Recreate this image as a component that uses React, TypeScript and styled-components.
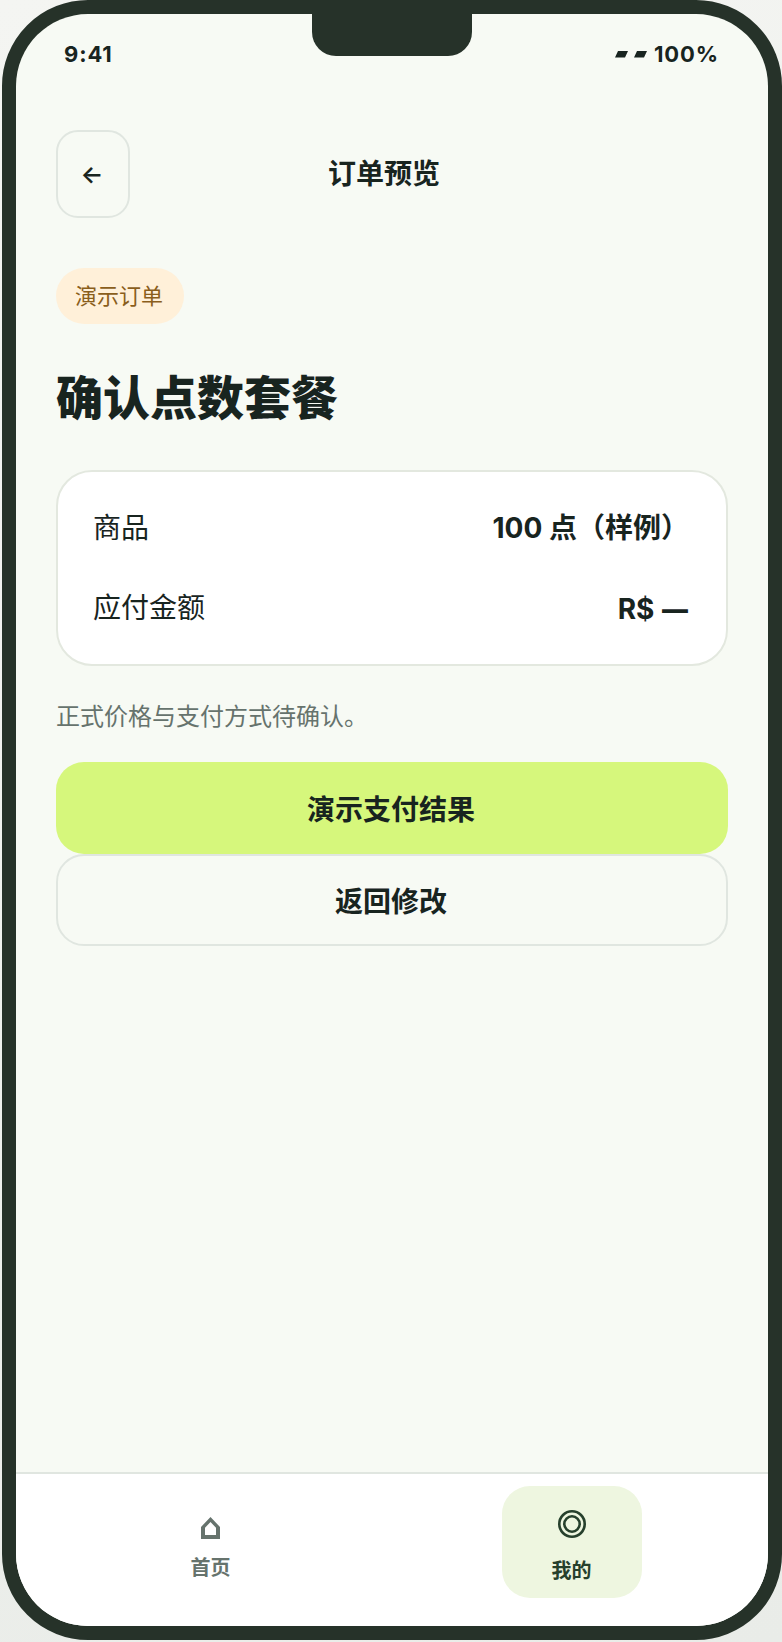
import React from "react";
import styled, { createGlobalStyle } from "styled-components";

const Global = createGlobalStyle`
  html, body { margin: 0; padding: 0; }
  body {
    width: 782px;
    height: 1642px;
    overflow: hidden;
    background: linear-gradient(160deg, #f4f5f2 0%, #e9ece8 100%);
    font-family: Inter, "Noto Sans CJK SC", sans-serif;
    color: #18241f;
  }
  * { box-sizing: border-box; }
`;

const Page = styled.div`
  width: 782px;
  height: 1642px;
  padding: 0 0 2px 2px;
`;

const Shell = styled.div`
  position: relative;
  width: 780px;
  height: 1640px;
  border: 14px solid #263229;
  border-radius: 86px;
  background: #263229;
`;

const Screen = styled.div`
  display: flex;
  flex-direction: column;
  height: 100%;
  border-radius: 72px;
  overflow: hidden;
  background: #f7faf4;
`;

const Notch = styled.div`
  position: absolute;
  top: -14px;
  left: 296px;
  width: 160px;
  height: 56px;
  border-radius: 0 0 24px 24px;
  background: #263229;
`;

const StatusBar = styled.div`
  display: flex;
  justify-content: space-between;
  align-items: center;
  height: 30px;
  margin-top: 25px;
  padding: 0 49px 0 48px;
  font-size: 22px;
  font-weight: 700;
  letter-spacing: 0.88px;
  line-height: 30px;
`;

const StatusRight = styled.span`
  display: flex;
  align-items: center;
  gap: 7px;
`;

const Signal = styled.svg`
  display: block;
  width: 32px;
  height: 8px;
  fill: #18241f;
`;

const Main = styled.main`
  flex: 1;
  display: flex;
  flex-direction: column;
  align-items: stretch;
  padding: 61px 40px 0;
`;

const Header = styled.header`
  display: grid;
  grid-template-columns: 74px 1fr 90px;
  align-items: center;
  height: 88px;
`;

const BackButton = styled.button`
  display: flex;
  align-items: center;
  justify-content: center;
  width: 74px;
  height: 88px;
  padding: 0 2px 0 0;
  border: 2px solid #e0e6e0;
  border-radius: 22px;
  background: transparent;
  color: #18241f;
  font: 600 24px Inter, "Noto Sans CJK SC", sans-serif;
`;

const Title = styled.h2`
  margin: 0;
  text-align: center;
  font-size: 28px;
  font-weight: 700;
  line-height: 40px;
`;

const Badge = styled.span`
  align-self: flex-start;
  margin-top: 50px;
  padding: 0 19px;
  width: 128px;
  height: 56px;
  border-radius: 28px;
  background: #fff0d9;
  color: #8a5e1c;
  font-size: 22px;
  line-height: 56px;
`;

const Heading = styled.h1`
  margin: 44px 0 42px;
  font-size: 47px;
  font-weight: 800;
  line-height: 60px;
`;

const Card = styled.section`
  display: flex;
  flex-direction: column;
  gap: 40px;
  padding: 36px 37px 36px 35px;
  border: 2px solid #e3e8df;
  border-radius: 36px;
  background: #fff;
`;

const Row = styled.div`
  display: flex;
  justify-content: space-between;
  align-items: center;
  height: 40px;
  font-size: 28px;
  line-height: 40px;
`;

const Value = styled.strong`
  font-weight: 700;
`;

const Dash = styled.span`
  font-family: "Open Sans", sans-serif;
  font-weight: 800;
`;

const Note = styled.p`
  margin: 33px 0 27px;
  color: #66736d;
  font-size: 24px;
  line-height: 36px;
`;

const ActionButton = styled.button<{ $primary?: boolean }>`
  display: block;
  width: 100%;
  height: 92px;
  padding: 0 2px 0 0;
  border: ${(p) => (p.$primary ? "none" : "2px solid #e0e6e0")};
  border-radius: 28px;
  background: ${(p) => (p.$primary ? "#d6f77c" : "transparent")};
  color: #18241f;
  font: 700 28px Inter, "Noto Sans CJK SC", sans-serif;
`;

const TabBar = styled.nav`
  display: grid;
  grid-template-columns: 1fr 1fr;
  justify-items: center;
  height: 154px;
  padding: 12px 16px 0 14px;
  border-top: 2px solid #e0e6e0;
  background: #fff;
`;

const Tab = styled.div<{ $active?: boolean }>`
  display: flex;
  flex-direction: column;
  align-items: center;
  justify-content: center;
  gap: ${(p) => (p.$active ? "19px" : "15px")};
  width: 140px;
  height: 112px;
  padding-top: ${(p) => (p.$active ? "10px" : "14px")};
  border-radius: 28px;
  background: ${(p) => (p.$active ? "#eef6e0" : "transparent")};
  color: ${(p) => (p.$active ? "#26402c" : "#66736d")};
  font-size: 20px;
  font-weight: 700;
`;

const TabIcon = styled.svg`
  display: block;
  fill: currentColor;
  flex: none;
`;

const TabLabel = styled.span`
  line-height: 28px;
`;

export default function App() {
  return (
    <Page>
      <Global />
      <Shell>
        <Notch />
        <Screen>
          <StatusBar>
            <span>9:41</span>
            <StatusRight>
              <Signal viewBox="0 0 32 8" aria-hidden="true">
                <path d="M3 1h10l-3 6.5H0zM22 1h10l-3 6.5H19z" />
              </Signal>
              <span>100%</span>
            </StatusRight>
          </StatusBar>
          <Main>
            <Header>
              <BackButton>←</BackButton>
              <Title>订单预览</Title>
            </Header>
            <Badge>演示订单</Badge>
            <Heading>确认点数套餐</Heading>
            <Card>
              <Row>
                <span>商品</span>
                <Value>100 点（样例）</Value>
              </Row>
              <Row>
                <span>应付金额</span>
                <Value>
                  R$ <Dash>—</Dash>
                </Value>
              </Row>
            </Card>
            <Note>正式价格与支付方式待确认。</Note>
            <ActionButton $primary>演示支付结果</ActionButton>
            <ActionButton>返回修改</ActionButton>
          </Main>
          <TabBar>
            <Tab>
              <TabIcon width="19" height="22" viewBox="0 0 19 22" aria-hidden="true">
                <path fillRule="evenodd" d="M9.5 0 19 10v12H0V10zM9.5 5 4 10.8V18h11v-7.2z" />
              </TabIcon>
              <TabLabel>首页</TabLabel>
            </Tab>
            <Tab $active>
              <TabIcon width="28" height="28" viewBox="0 0 28 28" aria-hidden="true">
                <path
                  fillRule="evenodd"
                  d="M14 0a14 14 0 1 0 0 28 14 14 0 0 0 0-28zm0 2.6a11.4 11.4 0 1 1 0 22.8 11.4 11.4 0 0 1 0-22.8zM14 5a9 9 0 1 0 0 18 9 9 0 0 0 0-18zm0 2.6a6.4 6.4 0 1 1 0 12.8 6.4 6.4 0 0 1 0-12.8z"
                />
              </TabIcon>
              <TabLabel>我的</TabLabel>
            </Tab>
          </TabBar>
        </Screen>
      </Shell>
    </Page>
  );
}
